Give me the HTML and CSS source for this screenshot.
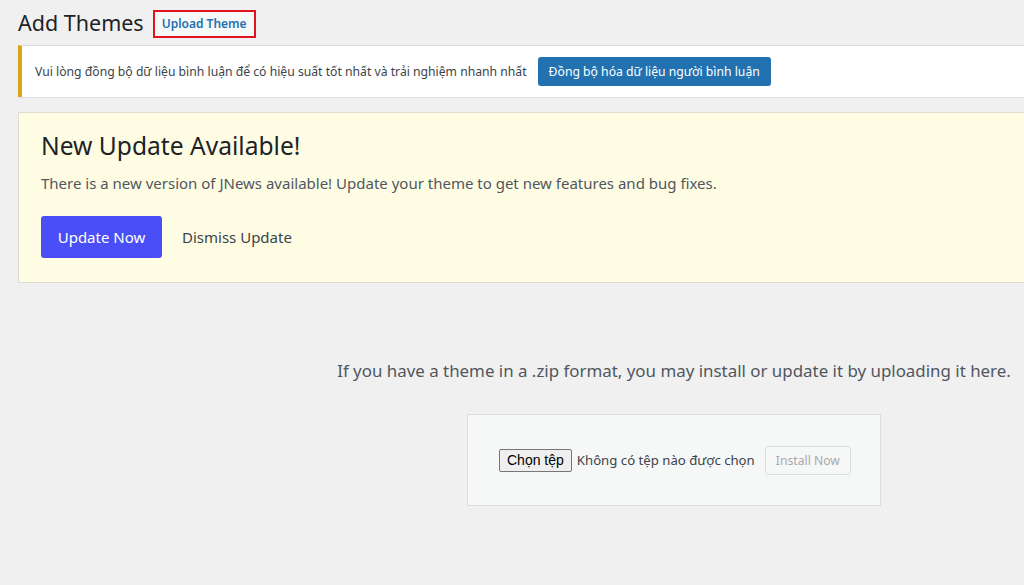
FILE: index.html
```html
<!DOCTYPE html>
<html lang="vi">
<head>
<meta charset="utf-8">
<link rel="stylesheet" href="styles.css">
</head>
<body>
<div class="wrap">
  <div class="head">
    <h1 class="title">Add Themes</h1>
    <a class="upload-toggle">Upload Theme</a>
  </div>
  <div class="notice">
    <span class="notice-text">Vui lòng đồng bộ dữ liệu bình luận để có hiệu suất tốt nhất và trải nghiệm nhanh nhất</span>
    <a class="btn-primary">Đồng bộ hóa dữ liệu người bình luận</a>
  </div>
  <div class="update">
    <h2 class="update-title">New Update Available!</h2>
    <p class="update-text">There is a new version of JNews available! Update your theme to get new features and bug fixes.</p>
    <div class="update-actions">
      <a class="btn-update">Update Now</a>
      <a class="btn-dismiss">Dismiss Update</a>
    </div>
  </div>
  <div class="upload">
    <p class="upload-help">If you have a theme in a .zip format, you may install or update it by uploading it here.</p>
    <div class="upload-box">
      <span class="file-btn">Chọn tệp</span>
      <span class="file-name">Không có tệp nào được chọn</span>
      <span class="btn-install">Install Now</span>
    </div>
  </div>
</div>
</body>
</html>
```
FILE: styles.css
```css
html, body {
  margin: 0;
  padding: 0;
  background: #f0f0f1;
  overflow: hidden;
  width: 1024px;
  height: 585px;
}
body {
  font-family: "Noto Sans", "Open Sans", sans-serif;
  color: #3c434a;
}
.wrap {
  width: 1312px;
  margin-left: 18px;
}
.head {
  display: flex;
  align-items: center;
  height: 45px;
  gap: 9px;
}
.title {
  margin: 0;
  font-size: 21.5px;
  font-weight: 400;
  color: #1d2327;
  line-height: 30px;
}
.upload-toggle {
  display: inline-block;
  box-sizing: border-box;
  height: 28px;
  padding: 0 7px;
  border: 2px solid #e0141e;
  background: #f6f7f7;
  color: #2271b1;
  font-size: 12px;
  font-weight: 600;
  line-height: 24px;
  position: relative;
  top: 1px;
}
.notice {
  display: flex;
  align-items: center;
  box-sizing: border-box;
  height: 52px;
  background: #fff;
  border-left: 4px solid #dba617;
  box-shadow: 0 1px 1px rgba(0,0,0,0.06);
  border-top: 1px solid #dcdcde;
  padding-left: 13px;
  gap: 11px;
}
.notice-text {
  font-size: 12.2px;
}
.btn-primary {
  display: inline-block;
  background: #2271b1;
  color: #fff;
  font-size: 12.2px;
  padding: 0 11px;
  height: 29px;
  line-height: 29px;
  border-radius: 3px;
}
.update {
  margin-top: 15px;
  box-sizing: border-box;
  height: 171px;
  background: #fefde4;
  border: 1px solid #dcdcd0;
  padding: 17px 22px;
}
.update-title {
  margin: 0;
  font-size: 24.6px;
  font-weight: 400;
  color: #1d2327;
  line-height: 32px;
}
.update-text {
  margin: 10px 0 0;
  font-size: 15px;
  color: #50575e;
  line-height: 22px;
}
.update-actions {
  display: flex;
  align-items: center;
  margin-top: 22px;
  gap: 20px;
}
.btn-update {
  display: inline-block;
  box-sizing: border-box;
  width: 121px;
  height: 42px;
  line-height: 42px;
  text-align: center;
  background: #4a4ef6;
  color: #fff;
  font-size: 15px;
  border-radius: 3px;
}
.btn-dismiss {
  font-size: 15px;
  color: #3c434a;
}
.upload {
  display: flex;
  flex-direction: column;
  align-items: center;
  padding-top: 76px;
}
.upload-help {
  margin: 0;
  font-size: 16.9px;
  color: #50575e;
  line-height: 24px;
}
.upload-box {
  margin-top: 31px;
  box-sizing: border-box;
  width: 414px;
  height: 92px;
  background: #f6f7f7;
  border: 1px solid #dcdcde;
  display: flex;
  align-items: center;
  padding-left: 31px;
}
.file-btn {
  box-sizing: border-box;
  height: 23px;
  line-height: 21px;
  padding: 0 7px;
  border: 1px solid #767676;
  background: #efefef;
  border-radius: 2px;
  color: #000;
  font-family: "Liberation Sans", Arial, sans-serif;
  font-size: 14px;
}
.file-name {
  margin-left: 5px;
  font-size: 13.2px;
  color: #3c434a;
}
.btn-install {
  margin-left: 10px;
  box-sizing: border-box;
  height: 29px;
  line-height: 27px;
  padding: 0 10px;
  border: 1px solid #dcdcde;
  background: #f6f7f7;
  border-radius: 3px;
  color: #a7aaad;
  font-size: 12.2px;
}
```
